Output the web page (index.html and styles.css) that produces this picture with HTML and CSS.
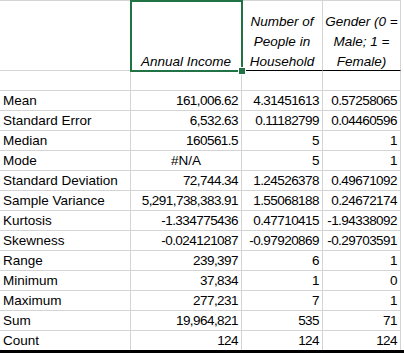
FILE: index.html
```html
<!DOCTYPE html>
<html>
<head>
<meta charset="utf-8">
<link rel="stylesheet" href="styles.css">
</head>
<body>
<div class="page">
  <div class="sheet">
    <div class="c hdr"></div>
    <div class="c hdr"><span class="htxt">Annual Income</span></div>
    <div class="c hdr dark"><span class="htxt">Number of<br>People in<br>Household</span></div>
    <div class="c hdr dark"><span class="htxt">Gender (0 =<br>Male; 1 =<br>Female)</span></div>

    <div class="c"></div><div class="c"></div><div class="c"></div><div class="c"></div>

    <div class="c lbl">Mean</div><div class="c num">161,006.62</div><div class="c num">4.31451613</div><div class="c num">0.57258065</div>
    <div class="c lbl">Standard Error</div><div class="c num">6,532.63</div><div class="c num">0.11182799</div><div class="c num">0.04460596</div>
    <div class="c lbl">Median</div><div class="c num">160561.5</div><div class="c num">5</div><div class="c num">1</div>
    <div class="c lbl">Mode</div><div class="c err">#N/A</div><div class="c num">5</div><div class="c num">1</div>
    <div class="c lbl">Standard Deviation</div><div class="c num">72,744.34</div><div class="c num">1.24526378</div><div class="c num">0.49671092</div>
    <div class="c lbl">Sample Variance</div><div class="c num">5,291,738,383.91</div><div class="c num">1.55068188</div><div class="c num">0.24672174</div>
    <div class="c lbl">Kurtosis</div><div class="c num">-1.334775436</div><div class="c num">0.47710415</div><div class="c num">-1.94338092</div>
    <div class="c lbl">Skewness</div><div class="c num">-0.024121087</div><div class="c num">-0.97920869</div><div class="c num">-0.29703591</div>
    <div class="c lbl">Range</div><div class="c num">239,397</div><div class="c num">6</div><div class="c num">1</div>
    <div class="c lbl">Minimum</div><div class="c num">37,834</div><div class="c num">1</div><div class="c num">0</div>
    <div class="c lbl">Maximum</div><div class="c num">277,231</div><div class="c num">7</div><div class="c num">1</div>
    <div class="c lbl">Sum</div><div class="c num">19,964,821</div><div class="c num">535</div><div class="c num">71</div>
    <div class="c lbl last">Count</div><div class="c num last">124</div><div class="c num last">124</div><div class="c num last">124</div>

    <div class="sel"></div>
    <div class="handle"></div>
  </div>
</div>
</body>
</html>
```

FILE: styles.css
```css
html, body {
  margin: 0;
  padding: 0;
  background: #ffffff;
}

.page {
  width: 404px;
  border-bottom: 3px solid #000000;
}

.sheet {
  position: relative;
  display: grid;
  grid-template-columns: 131px 111px 81px 78px;
  grid-template-rows: 70px repeat(13, 20px) 19px;
  width: 401px;
  border-top: 1px solid #d4d4d4;
  font-family: "Liberation Sans", Arial, sans-serif;
  font-size: 13.5px;
  color: #000000;
}

.c {
  box-sizing: border-box;
  height: 20px;
  border-right: 1px solid #d4d4d4;
  border-bottom: 1px solid #d4d4d4;
  padding: 1px 3px 0 3px;
  line-height: 18px;
  white-space: nowrap;
  overflow: hidden;
}

.hdr {
  height: 70px;
  display: flex;
  flex-direction: column;
  justify-content: flex-end;
  align-items: center;
  padding: 0 2px;
  overflow: visible;
}

.hdr.dark {
  border-bottom-color: #000000;
}

.htxt {
  display: block;
  font-style: italic;
  line-height: 20px;
  text-align: center;
  margin-bottom: -2px;
}

.lbl {
  text-align: left;
}

.num {
  text-align: right;
  letter-spacing: -0.55px;
  padding-right: 3px;
}

.err {
  text-align: center;
}

.last {
  height: 19px;
  border-bottom: none;
}

.sel {
  position: absolute;
  left: 130px;
  top: -1px;
  width: 113px;
  height: 72px;
  box-sizing: border-box;
  border: 2px solid #217346;
}

.handle {
  position: absolute;
  left: 238px;
  top: 66px;
  width: 6px;
  height: 6px;
  background: #217346;
  border: 1px solid #ffffff;
}
```
